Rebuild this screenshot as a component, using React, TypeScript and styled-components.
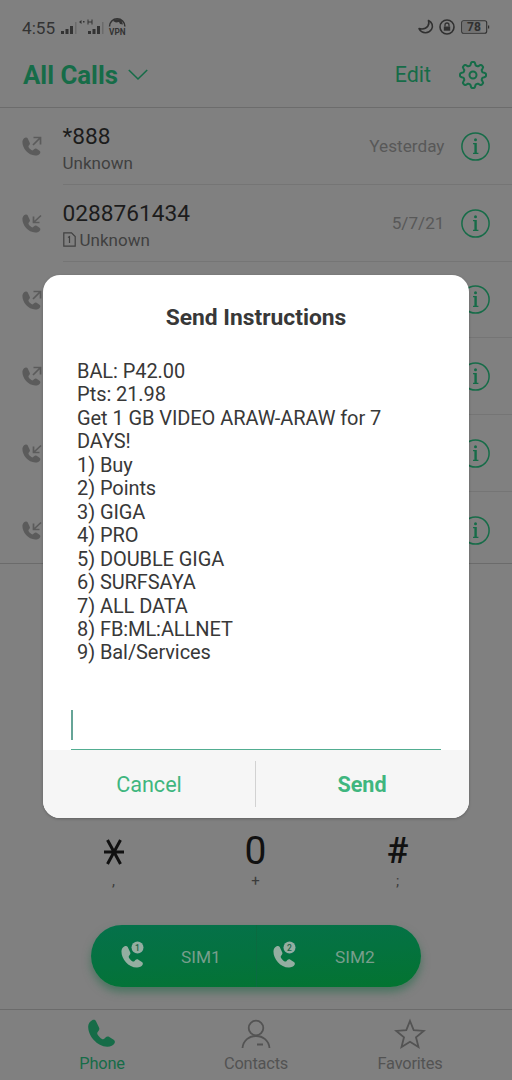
import React from "react";
import styled, { createGlobalStyle } from "styled-components";

const green = "#166c48";
const bright = "#3fb67f";

const GlobalStyle = createGlobalStyle`
  * { box-sizing: border-box; }
  body { margin: 0; background: #808080; }
  svg { display: block; flex: none; overflow: visible; }
  button { border: 0; padding: 0; background: none; font: inherit; color: inherit; }
`;

const Screen = styled.div`
  position: relative;
  width: 512px;
  height: 1080px;
  display: flex;
  flex-direction: column;
  overflow: hidden;
  background: #808080;
  font-family: Roboto, sans-serif;
  color: #1c1c1c;
`;

const StatusBar = styled.div`
  height: 48px;
  padding: 6px 23px 0 22px;
  display: flex;
  align-items: center;
  justify-content: space-between;
  color: #333;
`;

const StatusGroup = styled.div<{ $gap: number }>`
  display: flex;
  align-items: center;
  gap: ${(p) => p.$gap}px;
`;

const Clock = styled.span`
  font-size: 17.2px;
  line-height: 20px;
  padding-top: 1px;
`;

const Header = styled.header`
  height: 60px;
  padding: 0 25px 6px 23px;
  display: flex;
  align-items: center;
  border-bottom: 1px solid #6c6c6c;
  color: ${green};
`;

const Title = styled.h1`
  margin: 0 10px 0 0;
  font-size: 25.8px;
  line-height: 30px;
  font-weight: 700;
`;

const EditButton = styled.button`
  margin-left: auto;
  margin-right: 28px;
  font-size: 21.4px;
  line-height: 28px;
  padding-top: 1px;
`;

const CallList = styled.div`
  height: 456px;
  border-bottom: 1px solid #6b6b6b;
  display: flex;
  flex-direction: column;
  overflow: hidden;
`;

const CallRow = styled.div`
  flex: 0 0 76.75px;
  display: flex;
  padding-left: 21px;
`;

const Direction = styled.div`
  width: 41.6px;
  padding-top: 28px;
  color: #5b5b5b;
`;

const RowBody = styled.div`
  flex: 1;
  display: flex;
  align-items: center;
  border-bottom: 1px solid #757575;
  padding: 1px 22.5px 0 0;
`;

const Caller = styled.div`
  flex: 1;
  display: flex;
  flex-direction: column;
  padding-top: 6px;
`;

const Number = styled.div`
  height: 27px;
  line-height: 27px;
  font-size: 22.7px;
`;

const Label = styled.div`
  height: 26px;
  display: flex;
  align-items: center;
  gap: 4px;
  font-size: 17px;
  color: #404040;
`;

const CallDate = styled.div`
  font-size: 17.2px;
  color: #585858;
  margin-right: 16px;
`;

const Keypad = styled.div`
  flex: 1;
  display: flex;
  flex-direction: column;
  justify-content: flex-end;
  align-items: center;
`;

const KeyRow = styled.div`
  width: 426px;
  height: 66px;
  display: grid;
  grid-template-columns: repeat(3, 1fr);
  margin: 0 1px 29px 0;
`;

const Key = styled.div`
  display: flex;
  flex-direction: column;
  align-items: center;
`;

const KeyMain = styled.div<{ $size?: number }>`
  height: 43px;
  display: flex;
  align-items: center;
  font-size: ${(p) => p.$size ?? 39}px;
  font-weight: ${(p) => (p.$size ? 500 : 400)};
  line-height: 43px;
  color: #111;
`;

const KeySub = styled.div`
  font-size: 15px;
  line-height: 17px;
  color: #3b3b3b;
`;

const CallBar = styled.div`
  width: 330px;
  height: 62px;
  margin-bottom: 22px;
  border-radius: 31px;
  display: flex;
  background: linear-gradient(176deg, #05714b 0%, #04723f 50%, #037430 100%);
  box-shadow: 0 5px 9px rgba(30, 105, 70, 0.55);
`;

const SimButton = styled.button<{ $left: number; $gap: number }>`
  width: 50%;
  display: flex;
  align-items: center;
  padding-left: ${(p) => p.$left}px;
  gap: ${(p) => p.$gap}px;
  font-size: 17.3px;
  color: #789e8c;
  & + & { border-left: 1px solid #0a6b41; }
  & svg { margin-bottom: 4px; }
  & span { padding-top: 2px; }
`;

const TabBar = styled.nav`
  height: 71px;
  flex: none;
  border-top: 1px solid #6b6b6b;
  padding: 0 25px;
  display: grid;
  grid-template-columns: repeat(3, 1fr);
`;

const Tab = styled.div<{ $active?: boolean }>`
  display: flex;
  flex-direction: column;
  align-items: center;
  padding-top: 9px;
  gap: 5px;
  font-size: 16.4px;
  line-height: 20px;
  letter-spacing: -0.2px;
  color: ${(p) => (p.$active ? green : "#535353")};
`;

const Dialog = styled.section`
  position: absolute;
  left: 43px;
  top: 275px;
  width: 426px;
  height: 543px;
  border-radius: 17px;
  overflow: hidden;
  background: #fff;
  color: #383838;
  display: flex;
  flex-direction: column;
  box-shadow: 0 1px 3px rgba(0, 0, 0, 0.25);
`;

const DialogTitle = styled.h2`
  margin: 28px 0 0;
  text-align: center;
  font-size: 22.8px;
  line-height: 29px;
  font-weight: 700;
`;

const Message = styled.div`
  margin: 28px 34px 0;
  font-size: 20px;
  letter-spacing: -0.08px;
  line-height: 23.45px;
  white-space: pre-line;
`;

const Field = styled.div`
  margin: auto 28px 0;
  height: 40px;
  border-bottom: 1px solid #52ad91;
`;

const Caret = styled.div`
  width: 2px;
  height: 30px;
  background: #66a497;
`;

const Actions = styled.div`
  height: 68px;
  flex: none;
  display: flex;
  align-items: center;
  background: #f6f6f6;
  padding-right: 1px;
`;

const Action = styled.button<{ $strong?: boolean }>`
  flex: 1;
  font-size: 21.6px;
  line-height: 30px;
  padding-top: 2px;
  color: ${bright};
  font-weight: ${(p) => (p.$strong ? 700 : 400)};
`;

const Divider = styled.div`
  width: 1px;
  height: 46px;
  background: #d2d2d2;
`;

const HANDSET =
  "M4.8 1.2C3 2 1.2 4 1.1 6.8c-.2 9 8.2 18.8 17.8 19.1 3 .1 5.6-1.2 6.8-3.2.7-1.2.3-2.5-.8-3.3l-4.1-2.7c-1.2-.8-2.6-.5-3.5.5l-1.2 1.3c-1 .8-2.4.3-4.2-1.5-1.9-1.9-2.9-3.6-2.1-4.7l1.1-1.3c.8-1 .9-2.1.2-3.2L8.4 2C7.6.7 6.2.5 4.8 1.2z";

const Handset = ({ size }: { size: number }) => (
  <svg width={size} height={size} viewBox="0 0 28 28" fill="currentColor">
    <path d={HANDSET} />
  </svg>
);

const CallIcon = ({ incoming }: { incoming?: boolean }) => (
  <svg width="22" height="22" viewBox="0 0 22 22">
    <path d={HANDSET} fill="currentColor" transform="translate(.6 .8) scale(.72)" />
    <path
      d={incoming ? "M20 2.5 12.5 9.5M12.5 3.5v6h6" : "M12 9 19.5 1.5M12.5 1.5h7v7"}
      fill="none"
      stroke="currentColor"
      strokeWidth="1.7"
    />
  </svg>
);

const SimCallIcon = ({ n }: { n: string }) => (
  <svg width="24" height="27" viewBox="0 0 24 27">
    <path d={HANDSET} fill="#94aea1" transform="translate(-.5 4.3) scale(.86)" />
    <circle cx="16.5" cy="6.5" r="7.2" fill="#04714a" />
    <circle cx="16.5" cy="6.5" r="6" fill="#94aea1" />
    <text x="16.5" y="9.6" textAnchor="middle" fontSize="8.5" fontWeight="500" fill="#1d6245">{n}</text>
  </svg>
);

const Info = () => (
  <svg width="29" height="29" viewBox="0 0 29 29" fill="none" stroke={green} strokeWidth="1.5">
    <circle cx="14.5" cy="14.5" r="13.6" />
    <path d="M12 11.6h3M12 21.3h5.4" strokeWidth="1.3" />
    <path d="M14.6 11v10.5" strokeWidth="2.4" />
    <circle cx="14.5" cy="7.7" r="1.5" fill={green} stroke="none" />
  </svg>
);

const gearPoints = () => {
  const pts: string[] = [];
  for (let i = 0; i < 96; i++) {
    const a = (i / 96) * Math.PI * 2;
    const wave = Math.max(-1, Math.min(1, 1.7 * Math.cos(a * 8)));
    const r = 11.4 + 1.6 * wave;
    pts.push(`${(14 + r * Math.sin(a)).toFixed(2)},${(14 - r * Math.cos(a)).toFixed(2)}`);
  }
  return pts.join(" ");
};

const Gear = () => (
  <svg width="28" height="28" viewBox="0 0 28 28" fill="none" stroke={green} strokeWidth="2" strokeLinejoin="round">
    <polygon points={gearPoints()} />
    <circle cx="14" cy="14" r="3.5" />
  </svg>
);

const Signals = () => (
  <svg width="65" height="20" viewBox="0 0 65 20" fill="#333">
    <path d="M0 14h3v3H0zM4.5 12h3v5h-3zM9 9h3v8H9z" />
    <path d="M14 5h1.5v12H14z" fill="#6b6b6b" />
    <path d="M18 5l2.5-2v4zM22 4h1.5v1.5H22z" />
    <path d="M27 2.5v5M31 2.5v5M27 5h4" stroke="#333" strokeWidth="1" />
    <path d="M27 14h3v3h-3zM31.5 12h3v5h-3zM36 9h3v8h-3z" />
    <path d="M41 5h1.500v12H41z" fill="#6b6b6b" />
    <path d="M48.5 9.5a7.6 7.6 0 0 1 15.4 0" fill="none" stroke="#333" strokeWidth="1.5" />
    <path d="M52 4c2-2 6-2.6 8.500-.5l1.500 4-3-.5-1-2-3 .5z" />
    <text x="48" y="17.5" fontSize="9.6" fontWeight="700" textLength="16.5" lengthAdjust="spacingAndGlyphs">VPN</text>
  </svg>
);

const StatusIcons = () => (
  <svg width="72" height="18" viewBox="0 0 72 18" fill="none" stroke="#303030" strokeWidth="1.6">
    <path d="M11.5 2.5c3.6 1.7 5 5.5 3 8.9C11.8 15.8 4.8 16 2 10.600c3.900.9 7.100 0 8.800-2.300 1.200-1.700 1.400-3.600.7-5.800z" strokeLinejoin="round" />
    <circle cx="30" cy="9" r="7" />
    <path d="M28 8.500V7a2 2 0 0 1 4 0v1.500" strokeWidth="1.3" />
    <path d="M26.8 8.500h6.400v4.200h-6.400z" fill="#303030" stroke="none" />
    <rect x="44.7" y="2.7" width="25" height="12.6" rx="2" strokeWidth="1.1" />
    <path d="M45.5 3.500h18v11h-18z" fill="#727272" stroke="none" />
    <path d="M71.6 7.500v3" strokeWidth="1.2" />
    <text x="57" y="13.3" textAnchor="middle" fontSize="12" fontWeight="700" fill="#303030" stroke="none">78</text>
  </svg>
);

const SimCard = () => (
  <svg width="13" height="15" viewBox="0 0 13 15" fill="none" stroke="#404040" strokeWidth="1.2">
    <path d="M.8.8h7.700l3.700 3.700v9.700H.8z" />
    <path d="M5 5.5 6.5 4.500v6.500" />
  </svg>
);

const calls = [
  { number: "*888", label: "Unknown", date: "Yesterday" },
  { number: "0288761434", label: "Unknown", date: "5/7/21", incoming: true, sim: true },
  {},
  {},
  { incoming: true },
  { incoming: true },
] as { number?: string; label?: string; date?: string; incoming?: boolean; sim?: boolean }[];

const message = `BAL: P42.00
Pts: 21.98
Get 1 GB VIDEO ARAW-ARAW for 7 DAYS!
1) Buy
2) Points
3) GIGA
4) PRO
5) DOUBLE GIGA
6) SURFSAYA
7) ALL DATA
8) FB:ML:ALLNET
9) Bal/Services`;

export default function App() {
  return (
    <Screen>
      <GlobalStyle />
      <StatusBar>
        <StatusGroup $gap={6}>
          <Clock>4:55</Clock>
          <Signals />
        </StatusGroup>
        <StatusIcons />
      </StatusBar>
      <Header>
        <Title>All Calls</Title>
        <svg width="20" height="12" viewBox="0 0 20 12" fill="none" stroke={green} strokeWidth="1.6">
          <path d="M.8 1l9.2 9 9.2-9" />
        </svg>
        <EditButton>Edit</EditButton>
        <Gear />
      </Header>
      <CallList>
        {calls.map((c, i) => (
          <CallRow key={i}>
            <Direction><CallIcon incoming={c.incoming} /></Direction>
            <RowBody>
              <Caller>
                {c.number && <Number>{c.number}</Number>}
                {c.label && <Label>{c.sim && <SimCard />}{c.label}</Label>}
              </Caller>
              {c.date && <CallDate>{c.date}</CallDate>}
              <Info />
            </RowBody>
          </CallRow>
        ))}
      </CallList>
      <Keypad>
        <KeyRow>
          <Key>
            <KeyMain>
              <svg width="22" height="26" viewBox="0 0 22 26" stroke="#111" strokeWidth="3">
                <path d="M1 13h20M4.500 1l13 24M17.500 1l-13 24" />
              </svg>
            </KeyMain>
            <KeySub>,</KeySub>
          </Key>
          <Key><KeyMain>0</KeyMain><KeySub>+</KeySub></Key>
          <Key><KeyMain $size={36}>#</KeyMain><KeySub>;</KeySub></Key>
        </KeyRow>
        <CallBar>
          <SimButton $left={30} $gap={36}><SimCallIcon n="1" /><span>SIM1</span></SimButton>
          <SimButton $left={16} $gap={38}><SimCallIcon n="2" /><span>SIM2</span></SimButton>
        </CallBar>
      </Keypad>
      <TabBar>
        <Tab $active>
          <Handset size={30} />
          Phone
        </Tab>
        <Tab>
          <svg width="30" height="30" viewBox="0 0 30 30" fill="none" stroke="currentColor" strokeWidth="1.8">
            <circle cx="15" cy="9" r="7.3" />
            <path d="M1.5 29c.8-7.5 6.5-12 13.500-12s12.700 4.500 13.500 12M16 25.500h6" />
          </svg>
          Contacts
        </Tab>
        <Tab>
          <svg width="30" height="30" viewBox="0 0 30 30" fill="none" stroke="currentColor" strokeWidth="1.8">
            <path d="M15 2l3.700 9.200 10 .7-7.700 6.400 2.500 9.700L15 22.700 6.500 28 9 18.300 1.300 11.900l10-.7z" />
          </svg>
          Favorites
        </Tab>
      </TabBar>
      <Dialog>
        <DialogTitle>Send Instructions</DialogTitle>
        <Message>{message}</Message>
        <Field><Caret /></Field>
        <Actions>
          <Action>Cancel</Action>
          <Divider />
          <Action $strong>Send</Action>
        </Actions>
      </Dialog>
    </Screen>
  );
}
